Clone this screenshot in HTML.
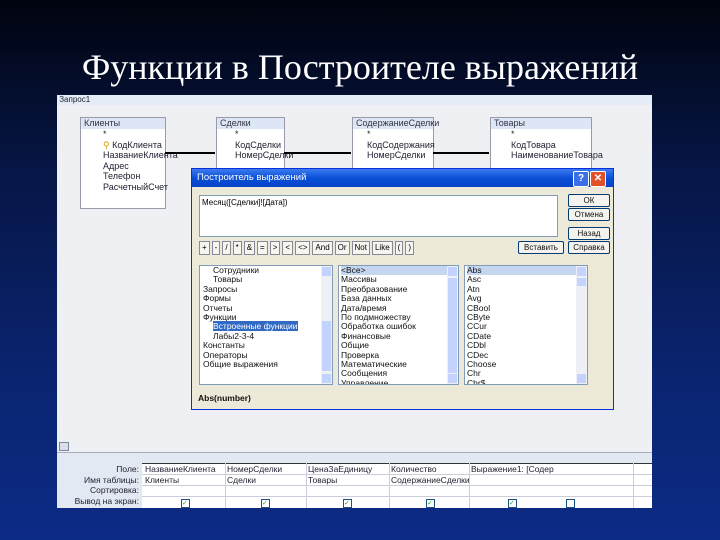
<html><head><style>
body{margin:0;width:720px;height:540px;overflow:hidden;background:linear-gradient(#01040f 0%,#061544 30%,#0a2470 70%,#0c2b86 100%);font-family:"Liberation Sans",sans-serif;position:relative}
.a{position:absolute}
.t{font-size:9px;color:#223;white-space:nowrap}
.tb{background:#fff;border:1px solid #99a;}
.th{background:#dde6f4;font-size:9px;color:#334;padding-left:3px;height:11px;line-height:11px}
.btn{position:absolute;background:#f4f3ee;border:1px solid #003c74;border-radius:2px;font-size:8px;text-align:center;line-height:11px;color:#111}
.ob{display:inline-block;border:1px solid #889;background:#f6f5f0;font-size:8px;padding:0 2px;height:12px;line-height:12px;margin-right:2px}
.lst{position:absolute;background:#fff;border:1px solid #7f9db9;font-size:8.5px;line-height:9.4px;color:#111;overflow:hidden}
.sb{position:absolute;right:0;top:0;bottom:0;width:11px;background:#eef0f6}
.sb:before{content:"";position:absolute;left:1px;top:1px;width:9px;height:9px;background:#c3d3fd}
.sb:after{content:"";position:absolute;left:1px;bottom:1px;width:9px;height:9px;background:#c3d3fd}
.th2{position:absolute;left:1px;width:9px;background:#c3d3fd}
.ck{display:inline-block;width:7px;height:7px;border:1px solid #1c5180;background:#fff;color:#2a2;font-size:7px;line-height:7px}
</style></head><body>
<div class="a" style="left:0;top:46px;width:720px;text-align:center;font-family:'Liberation Serif',serif;font-size:36px;color:#fff">Функции в Построителе выражений</div>
<div class="a" style="left:57px;top:95px;width:595px;height:413px;background:#eef0f4;overflow:hidden">
 <div class="a t" style="left:0;top:0;width:595px;height:10px;background:#e4ecf7;font-size:8px;line-height:10px">&nbsp;Запрос1</div>
 <div class="a tb" style="left:23px;top:22px;width:84px;height:90px"><div class="th">Клиенты</div><div class="t" style="padding-left:22px;line-height:10.5px">*<br><span style="color:#c90">&#9906;</span> КодКлиента<br>НазваниеКлиента<br>Адрес<br>Телефон<br>РасчетныйСчет</div></div>
 <div class="a tb" style="left:159px;top:22px;width:67px;height:70px"><div class="th">Сделки</div><div class="t" style="padding-left:18px;line-height:10.5px">*<br>КодСделки<br>НомерСделки</div></div>
 <div class="a tb" style="left:295px;top:22px;width:80px;height:70px"><div class="th">СодержаниеСделки</div><div class="t" style="padding-left:14px;line-height:10.5px">*<br>КодСодержания<br>НомерСделки</div></div>
 <div class="a tb" style="left:433px;top:22px;width:100px;height:70px"><div class="th">Товары</div><div class="t" style="padding-left:20px;line-height:10.5px">*<br>КодТовара<br>НаименованиеТовара</div></div>
 <div class="a" style="left:108px;top:57px;width:50px;border-top:2px solid #000"></div>
 <div class="a" style="left:227px;top:57px;width:67px;border-top:2px solid #000"></div>
 <div class="a" style="left:376px;top:57px;width:56px;border-top:2px solid #000"></div>
 <div class="a" style="left:0;top:345px;width:595px;height:12px;border-bottom:1px solid #aab;background:#eef0f4"><span class="a" style="left:2px;top:2px;width:8px;height:7px;border:1px solid #789;background:#dde"></span></div>
 <div class="a" style="left:0;top:358px;width:595px;height:55px;background:#e3e9f3"></div>
 <div class="a" style="left:85px;top:368px;width:510px;height:45px;background:#fff;border-top:1px solid #333"></div>
 <div class="a t" style="left:0;top:369px;width:82px;text-align:right;line-height:10.5px;font-size:8.5px">Поле:<br>Имя таблицы:<br>Сортировка:<br>Вывод на экран:</div>
 <div class="a t" style="left:88px;top:369px;line-height:10.5px;font-size:8.5px">НазваниеКлиента<br>Клиенты</div>
 <div class="a t" style="left:170px;top:369px;line-height:10.5px;font-size:8.5px">НомерСделки<br>Сделки</div>
 <div class="a t" style="left:251px;top:369px;line-height:10.5px;font-size:8.5px">ЦенаЗаЕдиницу<br>Товары</div>
 <div class="a t" style="left:334px;top:369px;line-height:10.5px;font-size:8.5px">Количество<br>СодержаниеСделки</div>
 <div class="a t" style="left:414px;top:369px;line-height:10.5px;font-size:8.5px">Выражение1: [Содер</div>
 <div class="a" style="left:85px;top:379px;width:510px;border-top:1px solid #ccd"></div>
 <div class="a" style="left:85px;top:390px;width:510px;border-top:1px solid #ccd"></div>
 <div class="a" style="left:85px;top:401px;width:510px;border-top:1px solid #ccd"></div>
 <div class="a" style="left:168px;top:368px;height:45px;border-left:1px solid #ccd"></div>
 <div class="a" style="left:249px;top:368px;height:45px;border-left:1px solid #ccd"></div>
 <div class="a" style="left:332px;top:368px;height:45px;border-left:1px solid #ccd"></div>
 <div class="a" style="left:412px;top:368px;height:45px;border-left:1px solid #ccd"></div>
 <div class="a" style="left:576px;top:368px;height:45px;border-left:1px solid #ccd"></div>
 <span class="a ck" style="left:124px;top:404px">&#10003;</span><span class="a ck" style="left:204px;top:404px">&#10003;</span><span class="a ck" style="left:286px;top:404px">&#10003;</span><span class="a ck" style="left:369px;top:404px">&#10003;</span><span class="a ck" style="left:451px;top:404px">&#10003;</span><span class="a ck" style="left:509px;top:404px"></span>
</div>
<div class="a" style="left:191px;top:168px;width:423px;height:242px;background:#ece9d8;border:1px solid #0831d9;box-sizing:border-box">
 <div class="a" style="left:0;top:0;width:421px;height:18px;background:linear-gradient(#3d7bf0,#0a4fd8 50%,#0743c8);color:#fff;font-size:9.5px;line-height:18px;padding-left:5px;box-sizing:border-box">Построитель выражений</div>
 <div class="a" style="left:381px;top:2px;width:14px;height:14px;background:#3b6fe8;border:1px solid #fff;border-radius:2px;color:#fff;font-size:10px;text-align:center;line-height:14px;font-weight:bold">?</div>
 <div class="a" style="left:398px;top:2px;width:14px;height:14px;background:#e0502a;border:1px solid #fff;border-radius:2px;color:#fff;font-size:10px;text-align:center;line-height:14px;font-weight:bold">✕</div>
 <div class="a" style="left:7px;top:26px;width:359px;height:42px;background:#fff;border:1px solid #7f9db9;font-size:8px;padding:2px;box-sizing:border-box">Месяц([Сделки]![Дата])</div>
 <div class="btn" style="left:376px;top:25px;width:40px">ОК</div>
 <div class="btn" style="left:376px;top:39px;width:40px">Отмена</div>
 <div class="btn" style="left:376px;top:58px;width:40px">Назад</div>
 <div class="btn" style="left:376px;top:72px;width:40px">Справка</div>
 <div class="btn" style="left:326px;top:72px;width:44px">Вставить</div>
 <div class="a" style="left:7px;top:72px;white-space:nowrap"><span class="ob">+</span><span class="ob">-</span><span class="ob">/</span><span class="ob">*</span><span class="ob">&amp;</span><span class="ob">=</span><span class="ob">&gt;</span><span class="ob">&lt;</span><span class="ob">&lt;&gt;</span><span class="ob">And</span><span class="ob">Or</span><span class="ob">Not</span><span class="ob">Like</span><span class="ob">(</span><span class="ob">)</span></div>
 <div class="lst" style="left:7px;top:96px;width:134px;height:120px;padding-left:3px;box-sizing:border-box"><div style="padding-left:10px">Сотрудники<br>Товары</div>Запросы<br>Формы<br>Отчеты<br>Функции<div style="padding-left:10px"><span style="background:#316ac5;color:#fff">Встроенные функции</span><br>Лабы2-3-4</div>Константы<br>Операторы<br>Общие выражения<div class="sb"><div class="th2" style="top:55px;height:50px"></div></div></div>
 <div class="lst" style="left:146px;top:96px;width:121px;height:120px;padding-left:2px;box-sizing:border-box"><span style="background:#c7d6f0;display:block">&lt;Все&gt;</span>Массивы<br>Преобразование<br>База данных<br>Дата/время<br>По подмножеству<br>Обработка ошибок<br>Финансовые<br>Общие<br>Проверка<br>Математические<br>Сообщения<br>Управление<div class="sb"><div class="th2" style="top:12px;height:95px"></div></div></div>
 <div class="lst" style="left:272px;top:96px;width:124px;height:120px;padding-left:2px;box-sizing:border-box"><span style="background:#c7d6f0;display:block">Abs</span>Asc<br>Atn<br>Avg<br>CBool<br>CByte<br>CCur<br>CDate<br>CDbl<br>CDec<br>Choose<br>Chr<br>Chr$<div class="sb"><div class="th2" style="top:12px;height:8px"></div></div></div>
 <div class="a" style="left:6px;top:224px;font-size:8.5px;font-weight:bold;color:#111">Abs(number)</div>
</div>
</body></html>
